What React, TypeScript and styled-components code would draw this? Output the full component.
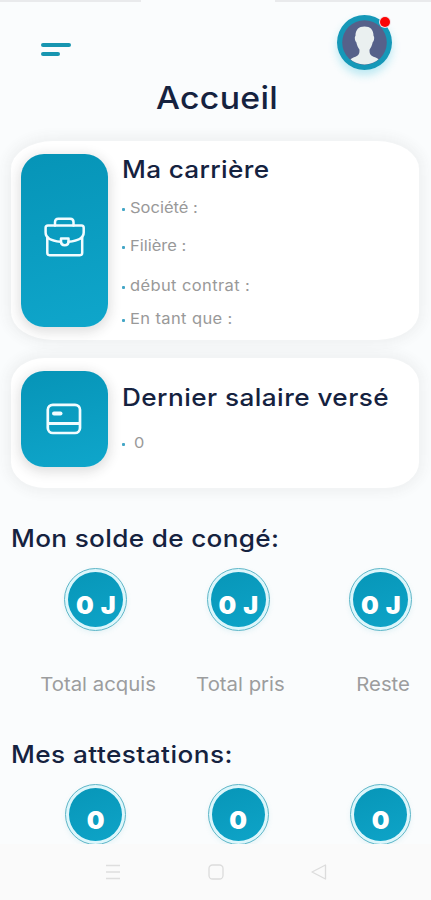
import React from "react";
import styled, { createGlobalStyle } from "styled-components";

const GlobalStyle = createGlobalStyle`
  * { box-sizing: border-box; }
  body {
    margin: 0;
    background: #fafcfd;
    font-family: Inter, "Open Sans", sans-serif;
  }
`;

const Screen = styled.div`
  width: 431px;
  height: 900px;
  overflow: hidden;
  display: flex;
  flex-direction: column;
  background: #fafcfd;
`;

const StatusEdge = styled.div`
  display: flex;
  justify-content: space-between;
  height: 2px;
  flex: none;
`;

const EdgeSegment = styled.div<{ $width: number }>`
  width: ${(p) => p.$width}px;
  background: #e9eaec;
`;

const Header = styled.header`
  flex: none;
  height: 76px;
  display: flex;
  justify-content: space-between;
  align-items: flex-start;
  padding: 13px 39px 0 41px;
`;

const MenuButton = styled.button`
  display: flex;
  flex-direction: column;
  gap: 5px;
  margin: 28px 0 0;
  padding: 0;
  border: 0;
  background: none;
`;

const MenuBar = styled.span<{ $width: number }>`
  width: ${(p) => p.$width}px;
  height: 4px;
  border-radius: 2px;
  background: #1795b0;
`;

const Avatar = styled.div`
  position: relative;
  width: 55px;
  height: 55px;
  border-radius: 50%;
  box-shadow: 0 5px 8px rgba(40, 190, 220, 0.3);
  svg { display: block; }
`;

const NotificationDot = styled.span`
  position: absolute;
  top: 2px;
  right: 2px;
  width: 10px;
  height: 10px;
  border-radius: 50%;
  background: #fb0505;
  box-shadow: 0 0 0 1px #f4dfe5;
`;

/* Widens the letterforms to a geometric, extended look. */
const Wide = styled.span<{ $stretch?: number; $spacing?: number; $center?: boolean }>`
  display: inline-block;
  transform: scaleX(${(p) => p.$stretch ?? 1.09});
  transform-origin: ${(p) => (p.$center ? "center" : "left")};
  letter-spacing: ${(p) => p.$spacing ?? 0}px;
`;

const PageTitle = styled.h1`
  flex: none;
  margin: 0;
  height: 63px;
  padding-left: 156px;
  font-size: 31px;
  line-height: 40px;
  font-weight: 500;
  color: #15223f;
  white-space: nowrap;
`;

const Card = styled.section<{ $height: number; $gap: number; $radius: string }>`
  flex: none;
  display: flex;
  align-items: flex-start;
  width: 408px;
  height: ${(p) => p.$height}px;
  margin: 0 0 ${(p) => p.$gap}px 11px;
  padding: 13px 0 0 10px;
  border-radius: ${(p) => p.$radius};
  background: #fff;
  box-shadow: 0 0 12px 5px rgba(60, 60, 60, 0.06);
`;

const Tile = styled.div<{ $height: number }>`
  flex: none;
  display: flex;
  justify-content: center;
  align-items: center;
  width: 87px;
  height: ${(p) => p.$height}px;
  border-radius: 23px;
  background: linear-gradient(165deg, #0694b7, #0fa6cb);
  box-shadow: 0 3px 12px 2px rgba(40, 40, 40, 0.15);
  svg { margin-top: -7px; }
`;

const CardTile = styled(Tile)`
  svg { margin: 0 0 0 -2px; }
`;

const CardBody = styled.div<{ $top?: number }>`
  padding: ${(p) => p.$top ?? 0}px 0 0 14px;
`;

const Heading = styled.h2`
  margin: 0;
  font-size: 24px;
  line-height: 32px;
  height: 30px;
  font-weight: 500;
  color: #15223f;
  white-space: nowrap;
`;

const FieldList = styled.ul`
  margin: 0;
  padding: 0;
  list-style: none;
`;

const Field = styled.li<{ $top: number; $indent?: number }>`
  display: flex;
  align-items: center;
  margin-top: ${(p) => p.$top}px;
  height: 20px;
  gap: ${(p) => p.$indent ?? 5}px;
  font-size: 15px;
  line-height: 20px;
  color: #999;
  white-space: nowrap;
  &::before {
    content: "";
    width: 3px;
    height: 3px;
    margin-top: 2px;
    border-radius: 1px;
    background: #43a6c6;
  }
`;

const Section = styled.section<{ $height: number }>`
  flex: none;
  height: ${(p) => p.$height}px;
  padding-left: 11px;
  overflow: hidden;
`;

const Stats = styled.div`
  display: grid;
  grid-template-columns: repeat(3, 142.5px);
  justify-items: center;
  margin: 15px 0 0 13.5px;
`;

const Stat = styled.div`
  display: flex;
  flex-direction: column;
  align-items: center;
`;

const Badge = styled.div<{ $size: number }>`
  width: ${(p) => p.$size}px;
  height: ${(p) => p.$size}px;
  padding: 3px;
  border: 1px solid #5fb6c8;
  border-radius: 50%;
  background: #dcf6fb;
  box-shadow: 0 2px 5px rgba(80, 180, 200, 0.12);
`;

const BadgeFill = styled.div`
  display: flex;
  justify-content: center;
  align-items: center;
  height: 100%;
  padding-top: 10px;
  border-radius: 50%;
  background: linear-gradient(160deg, #0796b8, #0ea4c8);
  color: #fff;
  font-size: 25px;
  line-height: 30px;
  font-weight: 900;
  word-spacing: 2px;
  white-space: nowrap;
`;

const StatLabel = styled.div`
  margin: 42px 0 0 4px;
  font-size: 19px;
  line-height: 24px;
  color: #9c9d9e;
  white-space: nowrap;
`;

const SystemNav = styled.nav`
  flex: 1;
  display: flex;
  align-items: flex-start;
  gap: 87px;
  padding: 20px 0 0 105px;
  background: #fafafa;
  svg { display: block; flex: none; }
`;

const Person = () => (
  <svg width="55" height="55" viewBox="0 0 55 55">
    <defs>
      <clipPath id="face"><circle cx="27.5" cy="27.5" r="22" /></clipPath>
    </defs>
    <circle cx="27.5" cy="27.5" r="27.5" fill="#1598b8" />
    <circle cx="27.5" cy="27.5" r="22.3" fill="#56618a" />
    <path
      clipPath="url(#face)"
      fill="#eaf0f0"
      d="M27.500 11.500C21.500 11.500 18.300 15 18.500 21C17.300 21.500 17.800 26 19.300 27.200C20 30.500 21.100 32.600 22.400 34.500C22.800 38.500 21.800 40.300 18.500 41.800C15.500 43 13.300 43.600 12.500 46V52H43V46C42 43.600 39.500 43 36.500 41.800C33.200 40.300 32.200 38.500 32.600 34.500C33.900 32.600 35 30.500 35.700 27.200C37.200 26 37.700 21.500 36.500 21C36.700 15 33.500 11.500 27.500 11.500Z"
    />
  </svg>
);

const Briefcase = () => (
  <svg width="42" height="40" viewBox="0 0 42 40" fill="none" stroke="#f1fcff" strokeWidth="2.500" strokeLinejoin="round" strokeLinecap="round">
    <path d="M11 8.500V5Q11 1.700 14.300 1.700H26.200Q29.500 1.700 29.500 5V8.500" />
    <path d="M24.500 24.800C33 24 39.700 21 39.700 15.500V10.800Q39.700 8.500 37.500 8.500H4Q1.600 8.500 1.600 10.800V15.500C1.600 21 8 24 16.500 24.800" />
    <path d="M3.300 20V36Q3.300 38.200 5.500 38.200H36Q38.200 38.200 38.200 36V20" />
    <path d="M17 21.500H24.500V24.500Q24.500 28.200 20.700 28.200Q17 28.200 17 24.500Z" />
  </svg>
);

const BankCard = () => (
  <svg width="36" height="32" viewBox="0 0 36 32" fill="none" stroke="#f1fcff">
    <rect x="1.800" y="1.800" width="32.200" height="28.200" rx="5" strokeWidth="2.700" />
    <path d="M2 20.500H34" strokeWidth="3" />
    <path d="M8 10.500H14.500" strokeWidth="4" strokeLinecap="round" />
  </svg>
);

const career = [
  { text: "Société :", top: 14, spacing: 0 },
  { text: "Filière :", top: 18, spacing: 0 },
  { text: "début contrat :", top: 20, spacing: 0.35 },
  { text: "En tant que :", top: 13, spacing: 0.35 },
];

const leave = ["Total acquis", "Total pris", "Reste"];

export default function App() {
  return (
    <>
      <GlobalStyle />
      <Screen>
        <StatusEdge>
          <EdgeSegment $width={141} />
          <EdgeSegment $width={156} />
        </StatusEdge>
        <Header>
          <MenuButton aria-label="Menu">
            <MenuBar $width={30} />
            <MenuBar $width={19} />
          </MenuButton>
          <Avatar>
            <Person />
            <NotificationDot />
          </Avatar>
        </Header>
        <PageTitle><Wide $spacing={0.3}>Accueil</Wide></PageTitle>
        <Card $height={199} $gap={18} $radius="42px / 28px">
          <Tile $height={173}><Briefcase /></Tile>
          <CardBody>
            <Heading><Wide $spacing={0.3}>Ma carrière</Wide></Heading>
            <FieldList>
              {career.map((f) => (
                <Field key={f.text} $top={f.top}>
                  <Wide $stretch={1.1} $spacing={f.spacing}>{f.text}</Wide>
                </Field>
              ))}
            </FieldList>
          </CardBody>
        </Card>
        <Card $height={130} $gap={35} $radius="34px / 26px">
          <CardTile $height={96}><BankCard /></CardTile>
          <CardBody $top={11}>
            <Heading><Wide $spacing={0.4}>Dernier salaire versé</Wide></Heading>
            <FieldList>
              <Field $top={21} $indent={9}><Wide>0</Wide></Field>
            </FieldList>
          </CardBody>
        </Card>
        <Section $height={216}>
          <Heading><Wide $spacing={0.3}>Mon solde de congé:</Wide></Heading>
          <Stats>
            {leave.map((label) => (
              <Stat key={label}>
                <Badge $size={63}><BadgeFill>0 J</BadgeFill></Badge>
                <StatLabel><Wide $center $stretch={1.07}>{label}</Wide></StatLabel>
              </Stat>
            ))}
          </Stats>
        </Section>
        <Section $height={105}>
          <Heading><Wide $spacing={0.4}>Mes attestations:</Wide></Heading>
          <Stats>
            {[0, 1, 2].map((i) => (
              <Stat key={i}>
                <Badge $size={61}><BadgeFill>0</BadgeFill></Badge>
              </Stat>
            ))}
          </Stats>
        </Section>
        <SystemNav>
          <svg width="16" height="16" fill="none" stroke="#dedede" strokeWidth="1.300">
            <path d="M1 1.500H15M1 8H15M1 14.500H15" />
          </svg>
          <svg width="16" height="16" fill="none" stroke="#dcdcdc" strokeWidth="1.300">
            <rect x="1" y="1" width="14" height="14" rx="3.500" />
          </svg>
          <svg width="16" height="16" fill="none" stroke="#dcdcdc" strokeWidth="1.300" strokeLinejoin="round">
            <path d="M1 8L14.500 1V15Z" />
          </svg>
        </SystemNav>
      </Screen>
    </>
  );
}
